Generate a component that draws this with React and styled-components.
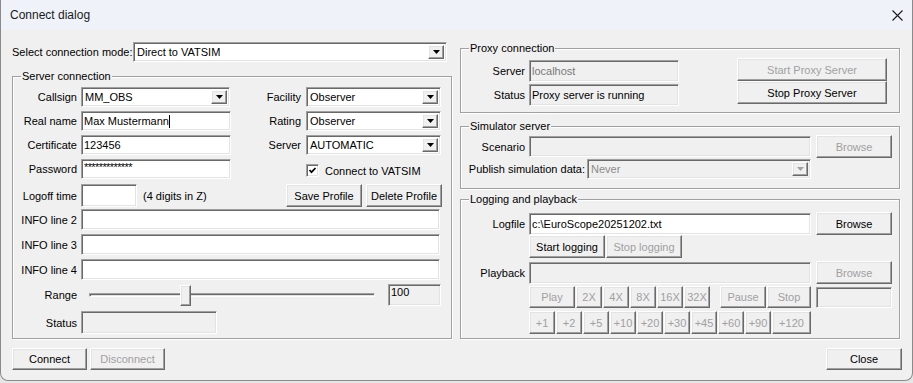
import React from 'react';
import styled, { createGlobalStyle, css } from 'styled-components';

const GlobalStyle = createGlobalStyle`
  html, body { margin: 0; padding: 0; background: #e6e6e6; }
  body { font-family: "Liberation Sans", Arial, sans-serif; font-size: 11px; color: #000; }
  * { box-sizing: border-box; }
`;

const sunken = css`
  border: 1px solid;
  border-color: #a0a0a0 #ffffff #ffffff #a0a0a0;
  box-shadow: inset 1px 1px 0 #696969, inset -1px -1px 0 #e3e3e3;
`;

const raised = css`
  border: 1px solid;
  border-color: #ffffff #696969 #696969 #ffffff;
  box-shadow: inset -1px -1px 0 #a0a0a0, inset 1px 1px 0 #e3e3e3;
`;

const Window = styled.div`
  width: 913px;
  height: 381px;
  background: #f0f0f0;
  border: 1px solid #8a8a8a;
  border-top: none;
  border-radius: 0 0 8px 8px;
  overflow: hidden;
  display: flex;
  flex-direction: column;
`;

const TitleBar = styled.div`
  height: 30px;
  flex: none;
  background: #eff3f9;
  display: flex;
  align-items: center;
  justify-content: space-between;
  padding-left: 9px;
  font-family: "Liberation Sans", Arial, sans-serif;
  font-size: 12px;
  color: #1a1a1a;
`;

const CloseBox = styled.div`
  width: 30px;
  height: 30px;
  display: flex;
  align-items: center;
  justify-content: center;
`;

const Body = styled.div`
  flex: 1;
  display: grid;
  grid-template-columns: 440px 440px;
  column-gap: 8px;
  align-items: start;
  padding: 12px 0 0 11px;
`;

const Column = styled.div`
  display: flex;
  flex-direction: column;
`;

const Group = styled.div`
  position: relative;
  height: ${(p) => p.$h}px;
  margin-top: ${(p) => p.$mt || 0}px;
  border: 1px solid #a0a0a0;
  box-shadow: inset 1px 1px 0 #ffffff, 1px 1px 0 #ffffff;
  display: flex;
  flex-direction: column;
`;

const Legend = styled.span`
  position: absolute;
  top: -7px;
  left: 8px;
  padding: 0 1px;
  line-height: 13px;
  background: #f0f0f0;
`;

const Row = styled.div`
  display: flex;
  align-items: ${(p) => p.$align || 'center'};
  height: ${(p) => p.$h}px;
  margin-top: ${(p) => p.$mt || 0}px;
  padding-left: ${(p) => p.$indent || 0}px;
  padding-right: ${(p) => p.$pr || 0}px;
  gap: ${(p) => p.$gap || 0}px;
  flex: none;
`;

const Label = styled.span`
  width: ${(p) => p.$w}px;
  flex: none;
  text-align: ${(p) => (p.$left ? 'left' : 'right')};
  padding-right: ${(p) => (p.$pr === undefined ? 4 : p.$pr)}px;
  white-space: nowrap;
`;

const Text = styled.span`
  white-space: nowrap;
  margin-left: ${(p) => p.$ml || 0}px;
`;

const Edit = styled.div`
  ${sunken};
  width: ${(p) => p.$w}px;
  height: ${(p) => p.$h || 20}px;
  flex: none;
  background: ${(p) => (p.$off ? '#f0f0f0' : '#ffffff')};
  color: ${(p) => p.$tone || '#000'};
  padding: ${(p) => (p.$top ? '1px 2px 0' : '0 2px')};
  margin-left: ${(p) => p.$ml || 0}px;
  display: flex;
  align-items: ${(p) => (p.$top ? 'flex-start' : 'center')};
  white-space: nowrap;
  overflow: hidden;
`;

const Caret = styled.span`
  display: inline-block;
  width: 1px;
  height: 13px;
  background: #000;
`;

const Stars = styled.span`
  letter-spacing: -0.6px;
  align-self: flex-start;
  margin-top: 1px;
`;

const ComboBox = styled.div`
  ${sunken};
  width: ${(p) => p.$w}px;
  height: ${(p) => p.$h || 20}px;
  flex: none;
  padding: 2px;
  display: flex;
  align-items: stretch;
  background: ${(p) => (p.$off ? '#f0f0f0' : '#ffffff')};
  color: ${(p) => (p.$off ? '#8c8c8c' : '#000')};
`;

const ComboText = styled.span`
  flex: 1;
  display: flex;
  align-items: center;
  padding-left: 1px;
  white-space: nowrap;
`;

const ComboArrow = styled.span`
  ${raised};
  width: 16px;
  flex: none;
  background: #f0f0f0;
  display: flex;
  align-items: center;
  justify-content: center;
`;

const Btn = styled.button`
  ${raised};
  width: ${(p) => p.$w}px;
  height: ${(p) => p.$h || 23}px;
  flex: none;
  margin: 0;
  margin-left: ${(p) => (p.$auto ? 'auto' : `${p.$ml || 0}px`)};
  padding: 0;
  background: #f0f0f0;
  font-family: "Liberation Sans", Arial, sans-serif;
  font-size: 11px;
  color: #000;
  white-space: nowrap;
  &:disabled {
    color: #a0a0a0;
  }
`;

const CheckWrap = styled.label`
  display: flex;
  align-items: center;
  gap: 6px;
  margin-left: ${(p) => p.$ml || 0}px;
  padding-top: 3px;
`;

const CheckBox = styled.span`
  ${sunken};
  width: 13px;
  height: 13px;
  background: #fff;
  display: flex;
  align-items: center;
  justify-content: center;
`;

const FieldCol = styled.div`
  display: flex;
  flex-direction: column;
  padding-top: ${(p) => p.$pt || 0}px;
`;

const ButtonStack = styled.div`
  display: flex;
  flex-direction: column;
  margin-left: auto;
  padding-top: ${(p) => p.$pt || 0}px;
  padding-right: ${(p) => p.$pr || 0}px;
`;

const SliderBox = styled.div`
  position: relative;
  width: 303px;
  height: 23px;
  flex: none;
  display: flex;
  align-items: center;
  padding: 0 9px 0 8px;
`;

const Track = styled.div`
  width: 100%;
  height: 4px;
  border: 1px solid;
  border-color: #a0a0a0 #ffffff #ffffff #a0a0a0;
  box-shadow: inset 1px 1px 0 #696969;
  background: #e3e3e3;
`;

const Thumb = styled.div`
  ${raised};
  position: absolute;
  top: 2px;
  width: 11px;
  height: 21px;
  background: #f0f0f0;
`;

const BottomRow = styled.div`
  display: flex;
  gap: ${(p) => p.$gap || 0}px;
  margin-top: 9px;
  justify-content: ${(p) => (p.$end ? 'flex-end' : 'flex-start')};
  margin-right: ${(p) => (p.$end ? -2 : 0)}px;
`;

const Arrow = ({ off }) => (
  <svg width="7" height="4" viewBox="0 0 7 4">
    <polygon points="0,0 7,0 3.5,4" fill={off ? '#a0a0a0' : '#000'} />
  </svg>
);

const Combo = ({ w, h, off, children }) => (
  <ComboBox $w={w} $h={h} $off={off}>
    <ComboText>{children}</ComboText>
    <ComboArrow>
      <Arrow off={off} />
    </ComboArrow>
  </ComboBox>
);

const multipliers = ['2X', '4X', '8X', '16X', '32X'];
const plus = ['+1', '+2', '+5', '+10', '+20', '+30', '+45', '+60', '+90'];

export default function App() {
  return (
    <>
      <GlobalStyle />
      <Window>
        <TitleBar>
          <span>Connect dialog</span>
          <CloseBox>
            <svg width="11" height="11" viewBox="0 0 11 11">
              <path d="M0.5 0.5 L10.5 10.5 M10.5 0.5 L0.5 10.5" stroke="#1a1a1a" strokeWidth="1.1" />
            </svg>
          </CloseBox>
        </TitleBar>
        <Body>
          <Column>
            <Row $h={20}>
              <Label $w={121} $pr={0} $left>Select connection mode:</Label>
              <Combo w={314}>Direct to VATSIM</Combo>
            </Row>
            <Group $h={263} $mt={14}>
              <Legend>Server connection</Legend>
              <Row $h={20} $mt={10}>
                <Label $w={68}>Callsign</Label>
                <Combo w={149}>MM_OBS</Combo>
                <Label $w={76} $pr={5}>Facility</Label>
                <Combo w={135}>Observer</Combo>
              </Row>
              <Row $h={20} $mt={4}>
                <Label $w={68}>Real name</Label>
                <Edit $w={150}>
                  Max Mustermann<Caret />
                </Edit>
                <Label $w={75} $pr={5}>Rating</Label>
                <Combo w={135}>Observer</Combo>
              </Row>
              <Row $h={20} $mt={4}>
                <Label $w={68}>Certificate</Label>
                <Edit $w={150}>123456</Edit>
                <Label $w={75} $pr={5}>Server</Label>
                <Combo w={135}>AUTOMATIC</Combo>
              </Row>
              <Row $h={20} $mt={4}>
                <Label $w={68}>Password</Label>
                <Edit $w={150}>
                  <Stars>*************</Stars>
                </Edit>
                <CheckWrap $ml={75}>
                  <CheckBox>
                    <svg width="9" height="9" viewBox="0 0 9 9">
                      <polyline points="1.5,4 3.5,6.2 7.5,2" fill="none" stroke="#000" strokeWidth="1.7" />
                    </svg>
                  </CheckBox>
                  <span>Connect to VATSIM</span>
                </CheckWrap>
              </Row>
              <Row $h={23} $mt={5} $pr={9}>
                <Label $w={68}>Logoff time</Label>
                <Edit $w={56} $h={23}></Edit>
                <Text $ml={6}>(4 digits in Z)</Text>
                <Btn $w={76} $auto>Save Profile</Btn>
                <Btn $w={76} $ml={4}>Delete Profile</Btn>
              </Row>
              <Row $h={21} $mt={2}>
                <Label $w={68}>INFO line 2</Label>
                <Edit $w={359} $h={21}></Edit>
              </Row>
              <Row $h={21} $mt={4}>
                <Label $w={68}>INFO line 3</Label>
                <Edit $w={359} $h={21}></Edit>
              </Row>
              <Row $h={21} $mt={4}>
                <Label $w={68}>INFO line 4</Label>
                <Edit $w={359} $h={21}></Edit>
              </Row>
              <Row $h={23} $mt={3}>
                <Label $w={68}>Range</Label>
                <SliderBox>
                  <Track />
                  <Thumb style={{ left: 99 }} />
                </SliderBox>
                <Edit $w={53} $h={22} $off $top $ml={4}>100</Edit>
              </Row>
              <Row $h={23} $mt={5}>
                <Label $w={68}>Status</Label>
                <Edit $w={136} $h={23} $off></Edit>
              </Row>
            </Group>
            <BottomRow $gap={3}>
              <Btn $w={75} $h={22}>Connect</Btn>
              <Btn $w={75} $h={22} disabled>Disconnect</Btn>
            </BottomRow>
          </Column>

          <Column>
            <Group $h={65} $mt={6}>
              <Legend>Proxy connection</Legend>
              <Row $h={63} $align="flex-start">
                <FieldCol $pt={11}>
                  <Row $h={22}>
                    <Label $w={68}>Server</Label>
                    <Edit $w={150} $h={22} $off $tone="#7a7a7a">localhost</Edit>
                  </Row>
                  <Row $h={22} $mt={2}>
                    <Label $w={68}>Status</Label>
                    <Edit $w={150} $h={22} $off>Proxy server is running</Edit>
                  </Row>
                </FieldCol>
                <ButtonStack $pt={9} $pr={12}>
                  <Btn $w={150} disabled>Start Proxy Server</Btn>
                  <Btn $w={150}>Stop Proxy Server</Btn>
                </ButtonStack>
              </Row>
            </Group>

            <Group $h={63} $mt={13}>
              <Legend>Simulator server</Legend>
              <Row $h={23} $mt={8}>
                <Label $w={68}>Scenario</Label>
                <Edit $w={282} $h={21} $off></Edit>
                <Btn $w={76} $ml={5} disabled>Browse</Btn>
              </Row>
              <Row $h={20} $mt={1}>
                <Label $w={126} $pr={2}>Publish simulation data:</Label>
                <Combo w={224} off>Never</Combo>
              </Row>
            </Group>

            <Group $h={140} $mt={10}>
              <Legend>Logging and playback</Legend>
              <Row $h={23} $mt={12}>
                <Label $w={68}>Logfile</Label>
                <Edit $w={282} $h={22}>c:\EuroScope20251202.txt</Edit>
                <Btn $w={76} $ml={5}>Browse</Btn>
              </Row>
              <Row $h={23} $indent={68} $gap={1}>
                <Btn $w={76}>Start logging</Btn>
                <Btn $w={76} disabled>Stop logging</Btn>
              </Row>
              <Row $h={23} $mt={3}>
                <Label $w={68}>Playback</Label>
                <Edit $w={282} $h={22} $off></Edit>
                <Btn $w={76} $ml={5} disabled>Browse</Btn>
              </Row>
              <Row $h={22} $mt={2} $indent={68}>
                <Btn $w={46} $h={22} disabled>Play</Btn>
                {multipliers.map((m) => (
                  <Btn key={m} $w={26} $h={22} $ml={1} disabled>{m}</Btn>
                ))}
                <Btn $w={46} $h={22} $ml={10} disabled>Pause</Btn>
                <Btn $w={44} $h={22} $ml={1} disabled>Stop</Btn>
                <Edit $w={76} $h={21} $off $ml={5}></Edit>
              </Row>
              <Row $h={23} $mt={3} $indent={68}>
                {plus.map((p, i) => (
                  <Btn key={p} $w={26} $ml={i === 0 ? 0 : 1} disabled>{p}</Btn>
                ))}
                <Btn $w={39} $ml={1} disabled>+120</Btn>
              </Row>
            </Group>
            <BottomRow $end>
              <Btn $w={76} $h={22}>Close</Btn>
            </BottomRow>
          </Column>
        </Body>
      </Window>
    </>
  );
}
